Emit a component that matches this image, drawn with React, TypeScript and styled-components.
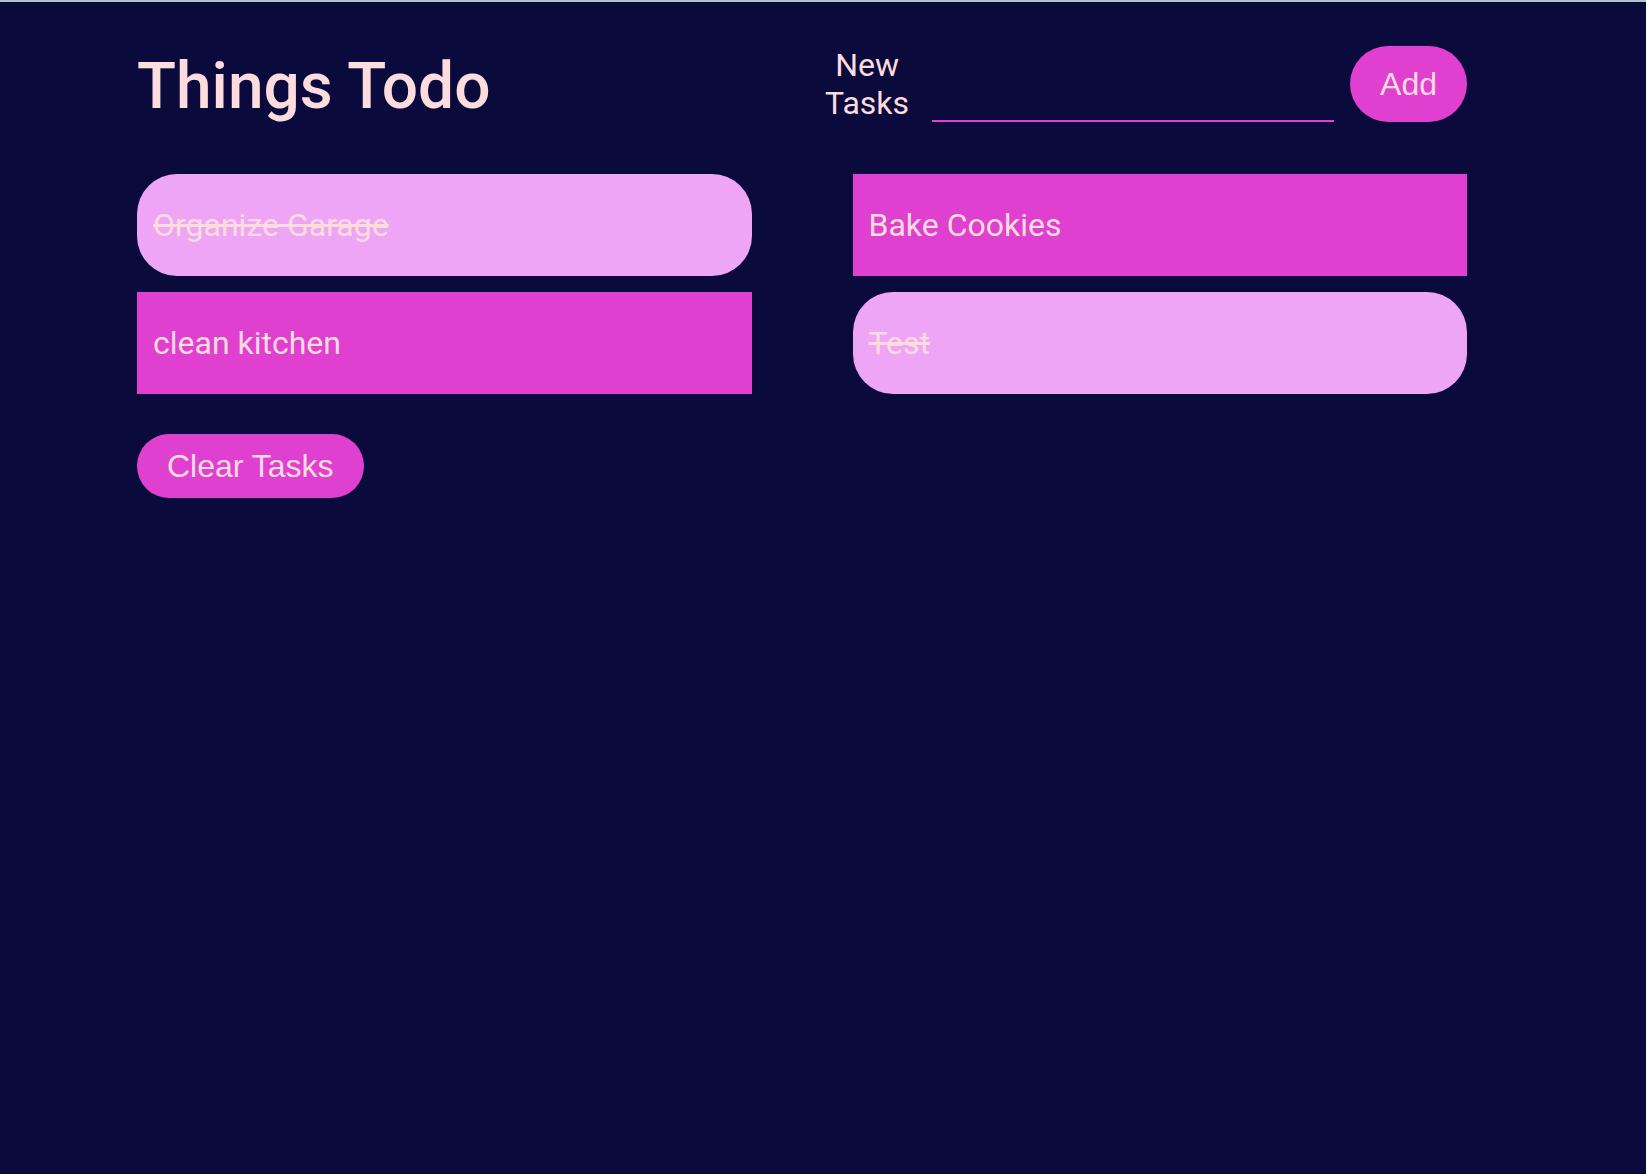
import React from 'react';
import styled, { createGlobalStyle } from 'styled-components';

type Task = {
  id: number;
  title: string;
  done: boolean;
};

const initialTasks: Array<Task> = [
  { id: 1, title: 'Organize Garage', done: true },
  { id: 2, title: 'Bake Cookies', done: false },
  { id: 3, title: 'clean kitchen', done: false },
  { id: 4, title: 'Test', done: true },
];

const GlobalStyle = createGlobalStyle`
  html, body {
    margin: 0;
    padding: 0;
    background: #b4c3c6;
  }
  body {
    padding-top: 2px;
  }
  * {
    box-sizing: border-box;
  }
`;

export default function App() {
  const [tasks, setTasks] = React.useState<Array<Task>>(initialTasks);
  const [value, setValue] = React.useState<string>('');

  const addTask = () => {
    if (!value.trim()) return;
    setTasks([...tasks, { id: Date.now(), title: value.trim(), done: false }]);
    setValue('');
  };

  const toggle = (id: number) => {
    setTasks(tasks.map((t) => (t.id === id ? { ...t, done: !t.done } : t)));
  };

  return (
    <Page>
      <GlobalStyle />
      <Wrapper>
        <Header>
          <Title>Things Todo</Title>
          <NewTaskForm
            onSubmit={(e) => {
              e.preventDefault();
              addTask();
            }}
          >
            <Label htmlFor="new-task">New Tasks</Label>
            <TaskInput
              id="new-task"
              type="text"
              value={value}
              onChange={(e) => setValue(e.target.value)}
            />
            <AddButton type="submit">Add</AddButton>
          </NewTaskForm>
        </Header>

        <TaskGrid>
          {tasks.map((task) => (
            <TaskCard key={task.id} done={task.done} onClick={() => toggle(task.id)}>
              {task.title}
            </TaskCard>
          ))}
        </TaskGrid>

        <ClearButton type="button" onClick={() => setTasks([])}>
          Clear Tasks
        </ClearButton>
      </Wrapper>
    </Page>
  );
}

const Page = styled.div`
  min-height: calc(100vh - 2px);
  background: #0b0a3c;
  padding: 44px 0 40px 137px;
  font-family: Roboto, "Noto Sans", sans-serif;
  color: #fcdcdc;
`;

const Wrapper = styled.div`
  width: 1330px;
`;

const Header = styled.header`
  display: flex;
  justify-content: space-between;
  align-items: stretch;
  height: 76px;
`;

const Title = styled.h1`
  margin: 3px 0 0;
  font-size: 64px;
  font-weight: 500;
  line-height: 76px;
  color: #fcdcdc;
`;

const NewTaskForm = styled.form`
  display: flex;
  align-items: stretch;
`;

const Label = styled.label`
  width: min-content;
  text-align: center;
  font-size: 32px;
  line-height: 38px;
  margin-right: 23px;
`;

const TaskInput = styled.input`
  width: 402px;
  background: transparent;
  border: none;
  border-bottom: 2px solid #e040cf;
  outline: none;
  color: #fcdcdc;
  font-family: Roboto, "Noto Sans", sans-serif;
  font-size: 32px;
  padding: 0 4px;
`;

const PillButton = styled.button`
  padding: 0 30px;
  border: none;
  background: #e040cf;
  color: #fcdcdc;
  font-family: "Liberation Sans", Arial, sans-serif;
  font-size: 32px;
  cursor: pointer;
`;

const AddButton = styled(PillButton)`
  margin-left: 16px;
  border-radius: 40px;
`;

const TaskGrid = styled.ul`
  list-style: none;
  margin: 52px 0 0;
  padding: 0;
  display: grid;
  grid-template-columns: 1fr 1fr;
  column-gap: 101px;
  row-gap: 16px;
`;

const TaskCard = styled.li<{ done: boolean }>`
  padding: 32px 16px;
  font-size: 32px;
  line-height: 38px;
  background: ${(props) => (props.done ? '#eea5f5' : '#e040cf')};
  border-radius: ${(props) => (props.done ? '40px' : '0')};
  text-decoration: ${(props) => (props.done ? 'line-through' : 'none')};
  cursor: pointer;
`;

const ClearButton = styled(PillButton)`
  display: block;
  margin-top: 40px;
  height: 64px;
  border-radius: 32px;
`;
